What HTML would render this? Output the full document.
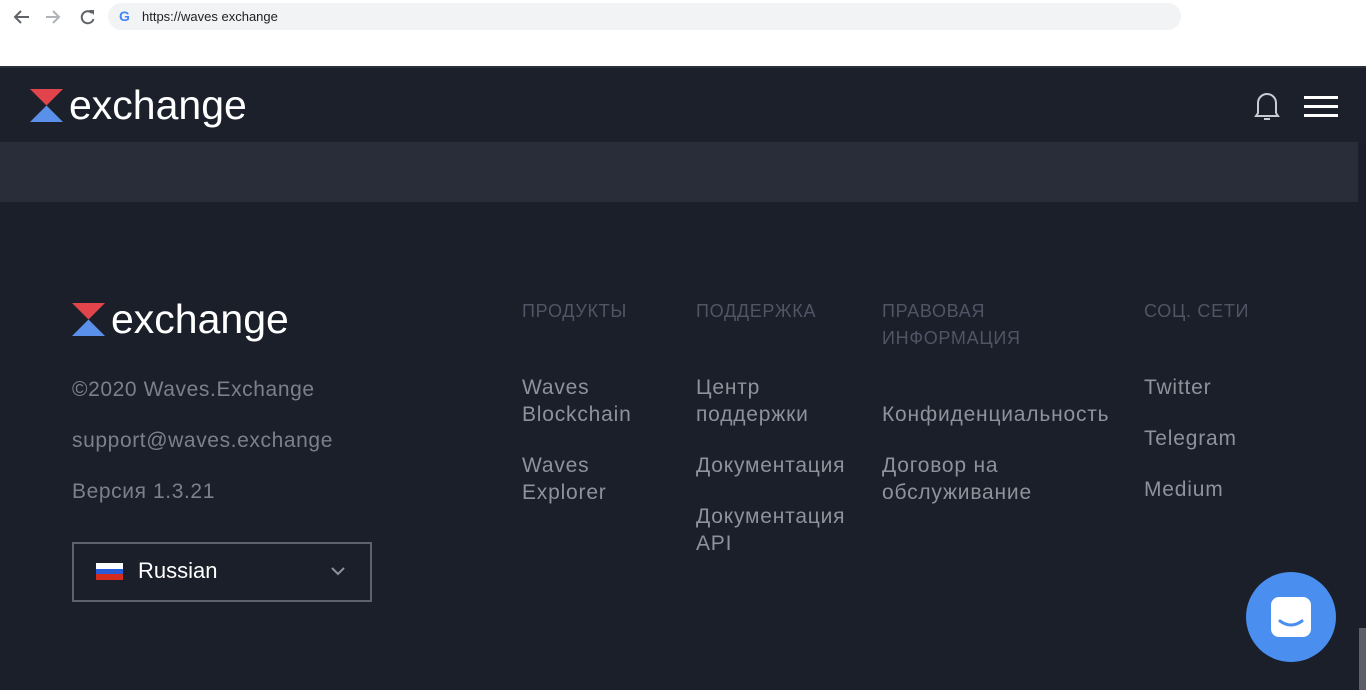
<!DOCTYPE html>
<html><head><meta charset="utf-8"><style>
*{margin:0;padding:0;box-sizing:border-box}
body{width:1366px;height:690px;overflow:hidden;background:#1a1f2a;font-family:"Liberation Sans",Arial,sans-serif;position:relative}
.top{position:absolute;left:0;top:0;width:1366px;height:66px;background:#fff}
.url{position:absolute;left:108px;top:3px;width:1073px;height:27px;background:#f1f3f4;border-radius:14px}
.url span{position:absolute;left:34px;top:6px;font-size:13px;color:#202124}
.hdr{position:absolute;left:0;top:66px;width:1366px;height:76px;background:#1b202b;border-top:2px solid #2a2f3a}
.band{position:absolute;left:0;top:142px;width:1358px;height:60px;background:#282d39}
.sb{position:absolute;left:1358px;top:142px;width:8px;height:548px;background:#1a1f2a}
.thumb{position:absolute;left:1359px;top:628px;width:7px;height:62px;background:#5a5f68}
.t{position:absolute;white-space:nowrap}
.h{font-size:18px;color:#4f5564;line-height:27px;letter-spacing:0.7px}
.l{font-size:21px;color:#8e929b;line-height:27px;letter-spacing:0.8px}
.g{font-size:21px;color:#7b808b;letter-spacing:0.6px}
</style></head><body>
<div class="top">
<svg style="position:absolute;left:13px;top:8px" width="90" height="18" viewBox="0 0 90 18"><path d="M16 9H2M8 3L2 9l6 6" stroke="#5f6368" stroke-width="2" fill="none"/><path d="M33 9h13M40 3l6 6-6 6" stroke="#b0b3b7" stroke-width="2" fill="none"/><path d="M79 5a6 6 0 1 0 1.5 6" stroke="#5f6368" stroke-width="2" fill="none"/><path d="M76 2h5v5z" fill="#5f6368"/></svg>
<div class="url"><span style="left:11px;top:5px;font-weight:bold;color:#4285f4;font-size:14px">G</span><span>https://waves exchange</span></div>
</div>
<div class="hdr">
<svg style="position:absolute;left:30px;top:21px" width="33" height="33" viewBox="0 0 33 33"><path d="M0 0h33L16.5 16.5z" fill="#e2444c"/><path d="M0 33h33L16.5 16.5z" fill="#5a8fea"/></svg>
<div class="t" style="left:69px;top:14px;font-size:41px;color:#fff">exchange</div>
<svg style="position:absolute;left:1253px;top:22px" width="28" height="32" viewBox="0 0 28 32"><path d="M5 23V13a9 9 0 0 1 18 0v10l2 3H3z" stroke="#c9ccd2" stroke-width="2" fill="none"/><path d="M11 29h6" stroke="#c9ccd2" stroke-width="2"/></svg>
<div style="position:absolute;left:1304px;top:28px;width:34px;height:3px;background:#fff"></div>
<div style="position:absolute;left:1304px;top:37px;width:34px;height:3px;background:#fff"></div>
<div style="position:absolute;left:1304px;top:46px;width:34px;height:3px;background:#fff"></div>
</div>
<div class="band"></div><div class="sb"></div><div class="thumb"></div>
<svg style="position:absolute;left:72px;top:303px" width="33" height="33" viewBox="0 0 33 33"><path d="M0 0h33L16.5 16.5z" fill="#e2444c"/><path d="M0 33h33L16.5 16.5z" fill="#5a8fea"/></svg>
<div class="t" style="left:111px;top:296px;font-size:41px;color:#fff">exchange</div>
<div class="t g" style="left:72px;top:378px">©2020 Waves.Exchange</div>
<div class="t g" style="left:72px;top:429px">support@waves.exchange</div>
<div class="t g" style="left:72px;top:480px">Версия 1.3.21</div>
<div style="position:absolute;left:72px;top:542px;width:300px;height:60px;border:2px solid #5d626c"></div>
<div style="position:absolute;left:96px;top:563px;width:27px;height:6px;background:#fff"></div>
<div style="position:absolute;left:96px;top:569px;width:27px;height:5px;background:#2a5bd7"></div>
<div style="position:absolute;left:96px;top:574px;width:27px;height:6px;background:#d52b1e"></div>
<div class="t" style="left:138px;top:558px;font-size:22px;color:#fff">Russian</div>
<svg style="position:absolute;left:330px;top:566px" width="16" height="10" viewBox="0 0 16 10"><path d="M2 2l6 6 6-6" stroke="#8e929b" stroke-width="2" fill="none"/></svg>
<div class="t h" style="left:522px;top:298px">ПРОДУКТЫ</div>
<div class="t l" style="left:522px;top:374px">Waves<br>Blockchain</div>
<div class="t l" style="left:522px;top:452px">Waves<br>Explorer</div>
<div class="t h" style="left:696px;top:298px">ПОДДЕРЖКА</div>
<div class="t l" style="left:696px;top:374px">Центр<br>поддержки</div>
<div class="t l" style="left:696px;top:452px">Документация</div>
<div class="t l" style="left:696px;top:503px">Документация<br>API</div>
<div class="t h" style="left:882px;top:298px">ПРАВОВАЯ<br>ИНФОРМАЦИЯ</div>
<div class="t l" style="left:882px;top:401px">Конфиденциальность</div>
<div class="t l" style="left:882px;top:452px">Договор на<br>обслуживание</div>
<div class="t h" style="left:1144px;top:298px">СОЦ. СЕТИ</div>
<div class="t l" style="left:1144px;top:374px">Twitter</div>
<div class="t l" style="left:1144px;top:425px">Telegram</div>
<div class="t l" style="left:1144px;top:476px">Medium</div>
<div style="position:absolute;left:1246px;top:572px;width:90px;height:90px;border-radius:50%;background:#4a8ef0"></div>
<svg style="position:absolute;left:1268px;top:594px" width="46" height="46" viewBox="0 0 46 46"><rect x="3" y="3" width="40" height="40" rx="8" fill="#fff"/><path d="M12 27q11 8 22 0" stroke="#4a8ef0" stroke-width="3" fill="none" stroke-linecap="round"/></svg>
</body></html>
